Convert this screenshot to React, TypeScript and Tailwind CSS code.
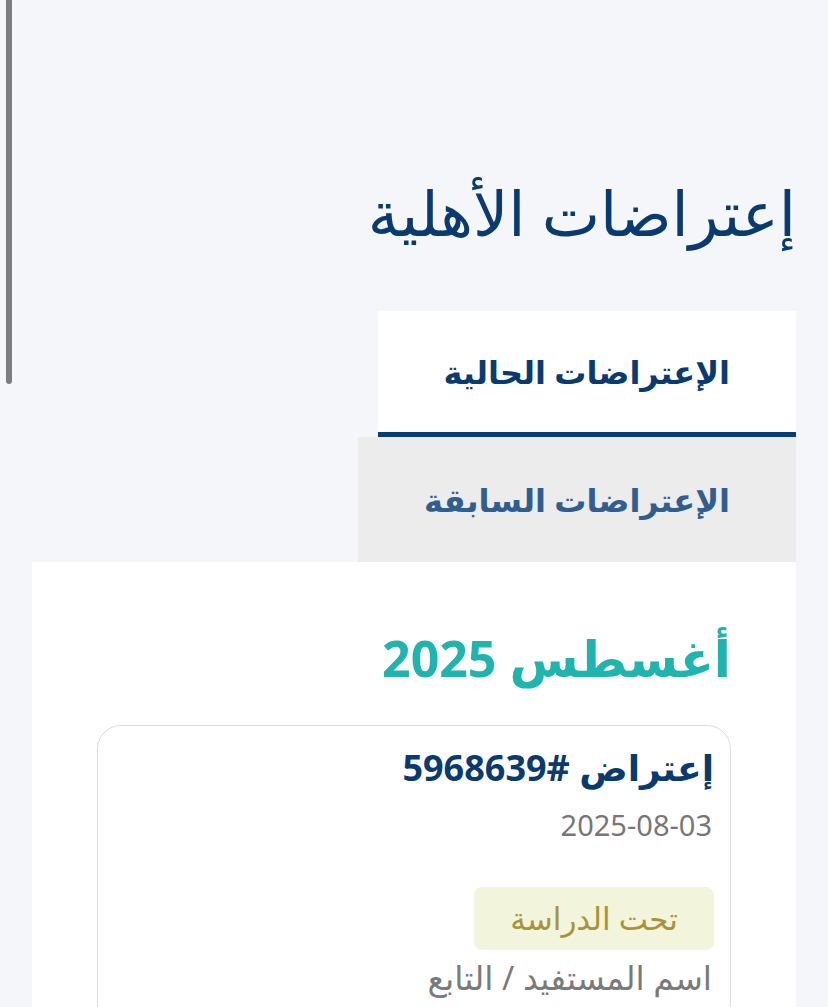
import React from "react";

export default function App() {
  const font = { fontFamily: '"Noto Sans", "DejaVu Sans", sans-serif' };
  return (
    <div
      dir="rtl"
      className="relative h-[1007px] w-full overflow-hidden bg-[#f5f6f9]"
      style={font}
    >
      <div className="absolute left-[6px] top-0 h-[384px] w-[6px] rounded-b-full bg-[#7c7c81]" />
      <div className="px-8 pt-[172px]">
        <h1 className="text-[62px] leading-[80px] font-normal text-[#0a3b70]">
          إعتراضات الأهلية
        </h1>
        <div className="mt-[59px] flex flex-col items-start">
          <div className="flex h-[126px] w-[418px] items-center border-b-[5px] border-[#063d78] bg-white pr-[66px]">
            <span className="text-[32px] font-bold text-[#0a3b70]">
              الإعتراضات الحالية
            </span>
          </div>
          <div className="flex h-[125px] w-[438px] items-center bg-[#ececec] pr-[66px]">
            <span className="text-[32px] font-bold text-[#2f5e8f]">
              الإعتراضات السابقة
            </span>
          </div>
        </div>
        <div className="bg-white px-[65px] pt-[62px] pb-10">
          <h2 className="text-[50px] leading-[68px] font-bold text-[#1fb5ae]">
            أغسطس 2025
          </h2>
          <div className="mt-[33px] rounded-[24px] border border-[#dddddd] pl-[18px] pr-[16px] pt-[17px] pb-6">
            <div className="text-[36px] leading-[50px] font-bold text-[#0a3b70]">
              إعتراض #5968639
            </div>
            <div className="mt-[13px] pr-[2px] text-[29px] leading-[38px] text-[#777777]">
              2025-08-03
            </div>
            <div className="mt-[43px] flex">
              <div className="flex h-[63px] w-[240px] items-center justify-center rounded-[8px] bg-[#f3f4dc] text-[31px] text-[#a8933a]">
                تحت الدراسة
              </div>
            </div>
            <div className="mt-[4px] pr-[2px] text-[33px] leading-[48px] text-[#7a7a7a]">
              اسم المستفيد / التابع
            </div>
          </div>
        </div>
      </div>
    </div>
  );
}
